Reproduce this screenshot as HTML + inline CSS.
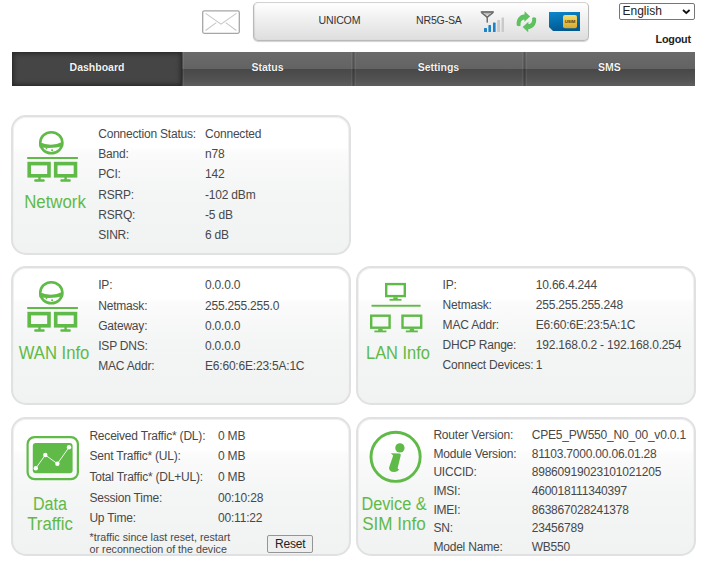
<!DOCTYPE html>
<html><head><meta charset="utf-8">
<style>
html,body{margin:0;padding:0;}
body{width:708px;height:570px;overflow:hidden;position:relative;background:#fff;font-family:"Liberation Sans",sans-serif;color:#484848;}
.t{position:absolute;line-height:1;white-space:nowrap;letter-spacing:-0.2px;}
.card{position:absolute;box-sizing:border-box;border:2px solid #e0e1e2;border-radius:15px;box-shadow:inset 0 0 0 1px #f1f1f2;
 background:linear-gradient(#ffffff 0%,#ffffff 22%,#fbfbfb 26%,#f4f5f5 55%,#f1f2f2 100%);}
.nav{position:absolute;left:12px;top:52px;width:683px;height:34px;}
.tab{position:absolute;top:0;height:34px;box-sizing:border-box;
 background:linear-gradient(#6a6a6a 0%,#636363 49.5%,#484848 50.5%,#525252 80%,#5e5e5e 100%);
}
.dv{position:absolute;top:0;height:34px;width:5px;background:linear-gradient(to right, rgba(255,255,255,.06) 0 1px, rgba(0,0,0,.07) 1px 2px, rgba(0,0,0,.19) 2px 3px, rgba(0,0,0,.07) 3px 4px, rgba(255,255,255,.06) 4px 5px);}
.tab.act{background:#454545;box-shadow:inset 0 0 5px #222;border:1px solid #2e2e2e;}
.tl{position:absolute;left:0;right:0;text-align:center;color:#f4f4f4;font-weight:bold;font-size:10.5px;line-height:1;text-shadow:0 0 1px #222;}
.stat{position:absolute;left:253px;top:2px;width:336px;height:39px;box-sizing:border-box;border:1px solid #b9b9b9;border-top-color:#d2d2d2;border-radius:5px;
 background:linear-gradient(#ffffff,#f1f1f1 40%,#dedede);box-shadow:0 1px 1px rgba(0,0,0,0.18), inset 1px 0 1px rgba(0,0,0,0.08);}
.sel{position:absolute;left:619px;top:3px;width:76px;height:16.5px;box-sizing:border-box;border:1px solid #767676;border-radius:2px;background:#fff;}
.btn{position:absolute;left:267px;top:535px;width:46px;height:18px;box-sizing:border-box;border:1px solid #959595;border-radius:2px;background:#efefef;}
.g{color:#5fba47;}
</style></head><body>
<div class="card" style="left:11px;top:115px;width:340px;height:140px"></div>
<div class="card" style="left:11px;top:266px;width:340px;height:139px"></div>
<div class="card" style="left:356px;top:266px;width:340px;height:139px"></div>
<div class="card" style="left:11px;top:417px;width:340px;height:139px"></div>
<div class="card" style="left:356px;top:417px;width:340px;height:139px"></div>
<div class="nav"><div class="tab act" style="left:0px;width:170px"><div class="tl" style="top:9.11px">Dashboard</div></div><div class="tab" style="left:170px;width:171px"><div class="tl" style="top:10.11px">Status</div></div><div class="tab" style="left:341px;width:171px"><div class="tl" style="top:10.11px">Settings</div></div><div class="tab" style="left:512px;width:171px"><div class="tl" style="top:10.11px">SMS</div></div><div class="dv" style="left:339px"></div><div class="dv" style="left:510px"></div><div style="position:absolute;left:170px;top:0;width:1px;height:34px;background:rgba(0,0,0,.22)"></div><div style="position:absolute;left:171px;top:0;width:1px;height:34px;background:rgba(255,255,255,.07)"></div></div>
<div class="stat"></div>
<div class="sel"></div>
<div class="t" style="left:622.50px;top:4.94px;font-size:12px;color:#222;letter-spacing:0">English</div>
<div class="t" style="left:655.50px;top:33.86px;font-size:10.8px;font-weight:bold;color:#222">Logout</div>
<div class="t" style="left:318.50px;top:15.13px;font-size:10.6px;color:#333">UNICOM</div>
<div class="t" style="left:416.00px;top:15.13px;font-size:10.6px;color:#333">NR5G-SA</div>
<svg style="position:absolute;left:0;top:0" width="708" height="570" viewBox="0 0 708 570"><rect x="202.7" y="10.9" width="36.6" height="22.4" rx="1.5" fill="#fff" stroke="#a6a6a6" stroke-width="1.3"/><path d="M205.6 13.4 L221 24.2 L236.4 13.4 M205.6 30.5 L216.3 22.6 M236.4 30.5 L225.7 22.6" fill="none" stroke="#c8c8c8" stroke-width="1.1"/><path d="M683 10 L686.3 13 L689.6 10" fill="none" stroke="#111" stroke-width="1.8"/><rect x="480.8" y="11.1" width="13" height="1.8" fill="#6e6e6e"/><path d="M481.6 12.6 L487.2 17.2 L492.9 12.6" fill="none" stroke="#6e6e6e" stroke-width="1.5"/><path d="M484.5 13.9 L490 13.9" stroke="#8e8e8e" stroke-width="1"/><rect x="486.5" y="16.5" width="1.5" height="6.1" fill="#6e6e6e"/><rect x="484" y="27.9" width="3" height="4.100000000000001" rx="0.6" fill="#1d83c7"/><rect x="488.4" y="25.1" width="2.6000000000000227" height="6.899999999999999" rx="0.6" fill="#1d83c7"/><rect x="493" y="22.6" width="2.6000000000000227" height="9.399999999999999" rx="0.6" fill="#1d83c7"/><rect x="497.2" y="20.1" width="2.8000000000000114" height="11.899999999999999" rx="0.6" fill="#c9c9c9"/><rect x="501.6" y="17.6" width="2.3999999999999773" height="14.399999999999999" rx="0.6" fill="#c9c9c9"/><g fill="#5cc15e"><path d="M516.7 25.2 C516.1 19.2 519.2 14.9 524.6 14.3 L524.6 11.3 L530.1 16.5 L524.4 21.8 L524.4 19.4 C521.6 19.6 520.1 22 520.7 25.6 Q518.6 27.1 516.7 25.2 Z"/><path d="M516.7 25.2 C516.1 19.2 519.2 14.9 524.6 14.3 L524.6 11.3 L530.1 16.5 L524.4 21.8 L524.4 19.4 C521.6 19.6 520.1 22 520.7 25.6 Q518.6 27.1 516.7 25.2 Z" transform="rotate(180 526.4 21.75)"/></g><defs><linearGradient id="simb" x1="0" y1="0" x2="0.3" y2="1"><stop offset="0" stop-color="#0b86cc"/><stop offset="1" stop-color="#005a92"/></linearGradient><linearGradient id="simg" x1="0" y1="0" x2="0" y2="1"><stop offset="0" stop-color="#f3dc70"/><stop offset="1" stop-color="#d6a92e"/></linearGradient></defs><path d="M549 12 L580 12 L580 31 L553 31 L549 27 Z" fill="url(#simb)"/><rect x="563" y="15" width="14" height="13.3" rx="2" fill="url(#simg)"/><text x="570" y="23.2" font-size="4.3" font-weight="bold" text-anchor="middle" fill="#4a3c10" font-family="Liberation Sans">USIM</text><g transform="translate(0,0)"><ellipse cx="51.3" cy="142.75" rx="11.1" ry="10.6" fill="none" stroke="#5fba47" stroke-width="2.5"/><path d="M39.4 141.9 Q51.3 147.6 63.2 141.4 L63.2 146.2 Q51.3 149.2 39.4 147.2 Z" fill="#5fba47"/><circle cx="46.4" cy="148.4" r="0.85" fill="#5fba47"/><circle cx="52.1" cy="150.3" r="1.05" fill="#5fba47"/><rect x="27.2" y="157" width="50.7" height="2" fill="#5fba47"/><rect x="29.2" y="163.6" width="19.8" height="12.2" fill="none" stroke="#5fba47" stroke-width="3.6"/><rect x="55.7" y="163.6" width="19.8" height="12.2" fill="none" stroke="#5fba47" stroke-width="3.6"/><rect x="38.3" y="177" width="2.4" height="3" fill="#5fba47"/><rect x="34.2" y="179.3" width="10.5" height="2.5" rx="1" fill="#5fba47"/><rect x="64.4" y="177" width="2.4" height="3" fill="#5fba47"/><rect x="60.3" y="179.3" width="10.5" height="2.5" rx="1" fill="#5fba47"/></g><g transform="translate(0,150)"><ellipse cx="51.3" cy="142.75" rx="11.1" ry="10.6" fill="none" stroke="#5fba47" stroke-width="2.5"/><path d="M39.4 141.9 Q51.3 147.6 63.2 141.4 L63.2 146.2 Q51.3 149.2 39.4 147.2 Z" fill="#5fba47"/><circle cx="46.4" cy="148.4" r="0.85" fill="#5fba47"/><circle cx="52.1" cy="150.3" r="1.05" fill="#5fba47"/><rect x="27.2" y="157" width="50.7" height="2" fill="#5fba47"/><rect x="29.2" y="163.6" width="19.8" height="12.2" fill="none" stroke="#5fba47" stroke-width="3.6"/><rect x="55.7" y="163.6" width="19.8" height="12.2" fill="none" stroke="#5fba47" stroke-width="3.6"/><rect x="38.3" y="177" width="2.4" height="3" fill="#5fba47"/><rect x="34.2" y="179.3" width="10.5" height="2.5" rx="1" fill="#5fba47"/><rect x="64.4" y="177" width="2.4" height="3" fill="#5fba47"/><rect x="60.3" y="179.3" width="10.5" height="2.5" rx="1" fill="#5fba47"/></g><rect x="386.2" y="284.09999999999997" width="18.6" height="12.000000000000034" fill="none" stroke="#5fba47" stroke-width="2.4"/><rect x="393.3" y="297.3" width="4.4" height="2" fill="#5fba47"/><rect x="389.5" y="298.90000000000003" width="12" height="1.8" fill="#5fba47"/><rect x="371.5" y="304.8" width="49.1" height="1.9" fill="#5fba47"/><rect x="371.2" y="315.7" width="18.400000000000013" height="11.999999999999977" fill="none" stroke="#5fba47" stroke-width="2.4"/><rect x="378.2" y="328.9" width="4.4" height="2" fill="#5fba47"/><rect x="374.4" y="330.5" width="12" height="1.8" fill="#5fba47"/><rect x="402.5" y="315.7" width="18.699999999999967" height="11.999999999999977" fill="none" stroke="#5fba47" stroke-width="2.4"/><rect x="409.65000000000003" y="328.9" width="4.4" height="2" fill="#5fba47"/><rect x="405.85" y="330.5" width="12" height="1.8" fill="#5fba47"/><rect x="27.6" y="437.1" width="50.3" height="42.1" rx="7" fill="none" stroke="#5fba47" stroke-width="2.2"/><rect x="32.8" y="443.1" width="39.8" height="30.1" rx="3" fill="#5fba47"/><path d="M35.8 468.2 L45.3 455 L57.4 463.7 L69 447.3" fill="none" stroke="#fff" stroke-width="0.9"/><circle cx="35.8" cy="468.2" r="2.2" fill="#fff"/><circle cx="45.3" cy="455" r="2.2" fill="#fff"/><circle cx="57.4" cy="463.7" r="2.2" fill="#fff"/><circle cx="69" cy="447.3" r="2.2" fill="#fff"/><circle cx="395.6" cy="456.8" r="24.6" fill="none" stroke="#5fba47" stroke-width="2.9"/><circle cx="399.9" cy="447.9" r="4.65" fill="#5fba47"/><path d="M390.9 453.3 L399.6 453.4 Q401.1 453.8 400.7 455.6 L397.6 468.2 Q398.1 469.4 399.4 469.1 Q397.8 472.1 394 472.1 Q388.9 471.7 389.1 467.4 L393.2 455.4 Z" fill="#5fba47"/></svg>
<div class="t" style="left:98.20px;top:127.74px;font-size:12px;">Connection Status:</div>
<div class="t" style="left:205.00px;top:127.74px;font-size:12px;">Connected</div>
<div class="t" style="left:98.20px;top:148.02px;font-size:12px;">Band:</div>
<div class="t" style="left:205.00px;top:148.02px;font-size:12px;">n78</div>
<div class="t" style="left:98.20px;top:168.30px;font-size:12px;">PCI:</div>
<div class="t" style="left:205.00px;top:168.30px;font-size:12px;">142</div>
<div class="t" style="left:98.20px;top:188.58px;font-size:12px;">RSRP:</div>
<div class="t" style="left:205.00px;top:188.58px;font-size:12px;">-102 dBm</div>
<div class="t" style="left:98.20px;top:208.86px;font-size:12px;">RSRQ:</div>
<div class="t" style="left:205.00px;top:208.86px;font-size:12px;">-5 dB</div>
<div class="t" style="left:98.20px;top:229.14px;font-size:12px;">SINR:</div>
<div class="t" style="left:205.00px;top:229.14px;font-size:12px;">6 dB</div>
<div class="t" style="left:98.20px;top:279.44px;font-size:12px;">IP:</div>
<div class="t" style="left:205.00px;top:279.44px;font-size:12px;">0.0.0.0</div>
<div class="t" style="left:98.20px;top:299.56px;font-size:12px;">Netmask:</div>
<div class="t" style="left:205.00px;top:299.56px;font-size:12px;">255.255.255.0</div>
<div class="t" style="left:98.20px;top:319.68px;font-size:12px;">Gateway:</div>
<div class="t" style="left:205.00px;top:319.68px;font-size:12px;">0.0.0.0</div>
<div class="t" style="left:98.20px;top:339.80px;font-size:12px;">ISP DNS:</div>
<div class="t" style="left:205.00px;top:339.80px;font-size:12px;">0.0.0.0</div>
<div class="t" style="left:98.20px;top:359.92px;font-size:12px;">MAC Addr:</div>
<div class="t" style="left:205.00px;top:359.92px;font-size:12px;">E6:60:6E:23:5A:1C</div>
<div class="t" style="left:442.60px;top:278.94px;font-size:12px;">IP:</div>
<div class="t" style="left:535.80px;top:278.94px;font-size:12px;">10.66.4.244</div>
<div class="t" style="left:442.60px;top:298.96px;font-size:12px;">Netmask:</div>
<div class="t" style="left:535.80px;top:298.96px;font-size:12px;">255.255.255.248</div>
<div class="t" style="left:442.60px;top:318.98px;font-size:12px;">MAC Addr:</div>
<div class="t" style="left:535.80px;top:318.98px;font-size:12px;">E6:60:6E:23:5A:1C</div>
<div class="t" style="left:442.60px;top:339.00px;font-size:12px;">DHCP Range:</div>
<div class="t" style="left:535.80px;top:339.00px;font-size:12px;">192.168.0.2 - 192.168.0.254</div>
<div class="t" style="left:442.60px;top:359.02px;font-size:12px;">Connect Devices:</div>
<div class="t" style="left:535.80px;top:359.02px;font-size:12px;">1</div>
<div class="t" style="left:89.40px;top:429.84px;font-size:12px;">Received Traffic* (DL):</div>
<div class="t" style="left:218.00px;top:429.84px;font-size:12px;">0 MB</div>
<div class="t" style="left:89.40px;top:450.44px;font-size:12px;">Sent Traffic* (UL):</div>
<div class="t" style="left:218.00px;top:450.44px;font-size:12px;">0 MB</div>
<div class="t" style="left:89.40px;top:471.04px;font-size:12px;">Total Traffic* (DL+UL):</div>
<div class="t" style="left:218.00px;top:471.04px;font-size:12px;">0 MB</div>
<div class="t" style="left:89.40px;top:491.64px;font-size:12px;">Session Time:</div>
<div class="t" style="left:218.00px;top:491.64px;font-size:12px;">00:10:28</div>
<div class="t" style="left:89.40px;top:512.24px;font-size:12px;">Up Time:</div>
<div class="t" style="left:218.00px;top:512.24px;font-size:12px;">00:11:22</div>
<div class="t" style="left:89.60px;top:531.84px;font-size:10.7px;letter-spacing:0">*traffic since last reset, restart</div>
<div class="t" style="left:89.60px;top:543.84px;font-size:10.7px;letter-spacing:0">or reconnection of the device</div>
<div class="btn"></div>
<div class="t" style="left:275.00px;top:538.34px;font-size:12px;color:#222">Reset</div>
<div class="t" style="left:433.40px;top:429.34px;font-size:12px;">Router Version:</div>
<div class="t" style="left:531.70px;top:429.34px;font-size:12px;">CPE5_PW550_N0_00_v0.0.1</div>
<div class="t" style="left:433.40px;top:447.91px;font-size:12px;">Module Version:</div>
<div class="t" style="left:531.70px;top:447.91px;font-size:12px;">81103.7000.00.06.01.28</div>
<div class="t" style="left:433.40px;top:466.48px;font-size:12px;">UICCID:</div>
<div class="t" style="left:531.70px;top:466.48px;font-size:12px;">89860919023101021205</div>
<div class="t" style="left:433.40px;top:485.05px;font-size:12px;">IMSI:</div>
<div class="t" style="left:531.70px;top:485.05px;font-size:12px;">460018111340397</div>
<div class="t" style="left:433.40px;top:503.62px;font-size:12px;">IMEI:</div>
<div class="t" style="left:531.70px;top:503.62px;font-size:12px;">863867028241378</div>
<div class="t" style="left:433.40px;top:522.19px;font-size:12px;">SN:</div>
<div class="t" style="left:531.70px;top:522.19px;font-size:12px;">23456789</div>
<div class="t" style="left:433.40px;top:540.76px;font-size:12px;">Model Name:</div>
<div class="t" style="left:531.70px;top:540.76px;font-size:12px;">WB550</div>
<div class="t" style="left:-45.10px;top:192.66px;width:200px;text-align:center;font-size:18px;letter-spacing:0;transform:scaleX(0.935);color:#5fba47">Network</div>
<div class="t" style="left:-45.60px;top:343.76px;width:200px;text-align:center;font-size:18px;letter-spacing:0;transform:scaleX(0.925);color:#5fba47">WAN Info</div>
<div class="t" style="left:298.20px;top:343.86px;width:200px;text-align:center;font-size:18px;letter-spacing:0;transform:scaleX(0.913);color:#5fba47">LAN Info</div>
<div class="t" style="left:-49.90px;top:495.26px;width:200px;text-align:center;font-size:18px;letter-spacing:0;transform:scaleX(0.894);color:#5fba47">Data</div>
<div class="t" style="left:-50.30px;top:515.06px;width:200px;text-align:center;font-size:18px;letter-spacing:0;transform:scaleX(0.93);color:#5fba47">Traffic</div>
<div class="t" style="left:294.30px;top:494.56px;width:200px;text-align:center;font-size:18px;letter-spacing:0;transform:scaleX(0.905);color:#5fba47">Device &amp;</div>
<div class="t" style="left:293.70px;top:514.86px;width:200px;text-align:center;font-size:18px;letter-spacing:0;transform:scaleX(0.95);color:#5fba47">SIM Info</div>
</body></html>
